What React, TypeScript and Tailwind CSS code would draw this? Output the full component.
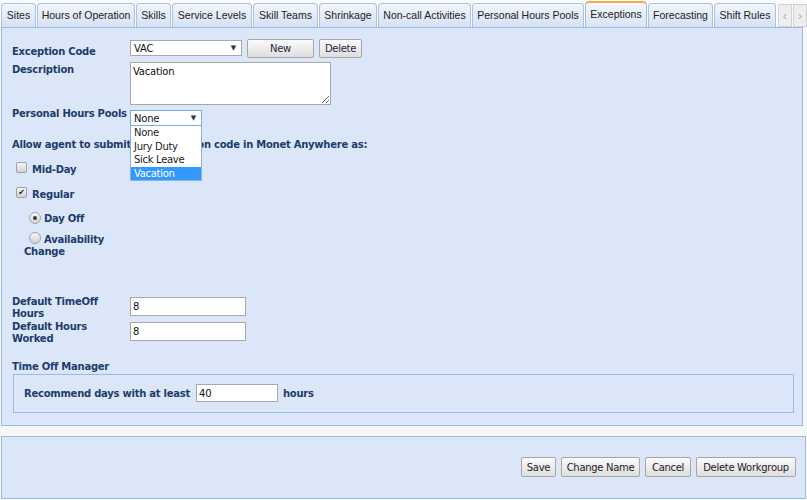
import React from 'react'

const tabs = [
  { label: 'Sites', w: 'w-[35px]' },
  { label: 'Hours of Operation', w: 'w-[98px]' },
  { label: 'Skills', w: 'w-[35px]' },
  { label: 'Service Levels', w: 'w-[80px]' },
  { label: 'Skill Teams', w: 'w-[65px]' },
  { label: 'Shrinkage', w: 'w-[58px]' },
  { label: 'Non-call Activities', w: 'w-[93px]' },
  { label: 'Personal Hours Pools', w: 'w-[112px]' },
  { label: 'Exceptions', w: 'w-[62px]', active: true },
  { label: 'Forecasting', w: 'w-[65px]' },
  { label: 'Shift Rules', w: 'w-[62px]' },
]

const pools = ['None', 'Jury Duty', 'Sick Leave', 'Vacation']

const label = 'font-bold leading-[12px] text-[10px] tracking-[-0.25px] text-[#1c3c6c]'
const field = 'border border-[#a9a9a9] bg-white px-[2px] text-[10px] tracking-[-0.2px] text-[#111] outline-none'

function Button({ children, w }: { children: React.ReactNode; w: string }) {
  return (
    <div
      className={`${w} flex h-[20px] items-center justify-center rounded-[2px] border border-[#a6a6a6] bg-gradient-to-b from-[#fbfbfb] to-[#dedede] text-[10px] tracking-[-0.3px] text-[#222]`}
    >
      {children}
    </div>
  )
}

function Checkbox({ checked }: { checked?: boolean }) {
  return (
    <div className="flex h-[11px] w-[11px] shrink-0 items-center justify-center rounded-[2px] border border-[#a0a0a0] bg-gradient-to-b from-[#f4f4f4] to-[#d4d4d4] text-[8px] leading-none text-[#222]">
      {checked ? '✔' : null}
    </div>
  )
}

function Radio({ checked }: { checked?: boolean }) {
  return (
    <div className="flex h-[12px] w-[12px] shrink-0 items-center justify-center rounded-full border border-[#a4a4a4] bg-gradient-to-b from-[#f6f6f6] to-[#d2d2d2]">
      {checked ? <div className="h-[4px] w-[4px] rounded-full bg-[#3a3a3a]" /> : null}
    </div>
  )
}

export default function App() {
  return (
    <div className="h-[500px] w-[807px] overflow-hidden bg-[#f7f7f7] font-['DejaVu_Sans',Verdana,sans-serif]">
      {/* tab strip */}
      <div className="flex h-[27px] items-end gap-[1px] bg-[#fbfbfb] pl-[1px] font-['Liberation_Sans',Arial,sans-serif] text-[10.5px] text-[#222]">
        {tabs.map((t) =>
          t.active ? (
            <div
              key={t.label}
              className={`${t.w} flex h-[26px] shrink-0 items-center justify-center rounded-t-[4px] border border-b-0 border-t-2 border-[#a3bde3] border-t-[#f2ac45] bg-gradient-to-b from-[#f3f7fd] to-[#d9e4f5]`}
            >
              {t.label}
            </div>
          ) : (
            <div
              key={t.label}
              className={`${t.w} flex h-[24px] shrink-0 items-center justify-center rounded-t-[4px] border border-b-0 border-[#a9c2e6] bg-gradient-to-b from-[#f2f6fc] to-[#d5e1f3] pt-[1px]`}
            >
              {t.label}
            </div>
          ),
        )}
        <div className="ml-[1px] flex h-[23px] w-[15px] items-center justify-center border border-[#d2d2d2] bg-[#eeeeee] text-[13px] text-[#b4b4b4]">‹</div>
        <div className="flex h-[23px] w-[15px] items-center justify-center border border-[#d2d2d2] bg-[#eeeeee] text-[13px] text-[#b4b4b4]">›</div>
      </div>

      {/* main panel */}
      <div className="ml-[1px] h-[399px] w-[802px] border border-[#99bbe8] bg-[#dbe6f8] pl-[10px] pt-[11px]">
        <div className="flex h-[19px]">
          <div className={`${label} w-[118px] shrink-0 pt-[7px]`}>Exception Code</div>
          <div className={`${field} mt-[1px] flex h-[16px] w-[112px] items-center justify-between pl-[3px] pr-[5px]`}>
            <span>VAC</span>
            <span className="text-[7px] text-[#333]">▼</span>
          </div>
          <div className="ml-[5px] flex h-[19px] w-[67px] items-center justify-center rounded-[2px] border border-[#a6a6a6] bg-gradient-to-b from-[#fbfbfb] to-[#dedede] text-[10px] tracking-[-0.3px] text-[#2a2440]">New</div>
          <div className="ml-[5px] flex h-[19px] w-[43px] items-center justify-center rounded-[2px] border border-[#a6a6a6] bg-gradient-to-b from-[#fbfbfb] to-[#dedede] text-[10px] tracking-[-0.3px] text-[#2a2440]">Delete</div>
        </div>

        <div className="mt-[4px] flex">
          <div className={`${label} w-[118px] shrink-0 pt-[2px]`}>Description</div>
          <textarea
            defaultValue="Vacation"
            className="h-[43px] w-[201px] border border-[#a9a9a9] bg-white px-[2px] pt-[2px] text-[10px] leading-[13px] tracking-[-0.2px] text-[#111] outline-none"
          />
        </div>

        <div className="mt-[2px] flex">
          <div className={`${label} w-[118px] shrink-0 pt-[1px]`}>Personal Hours Pools</div>
          <div className="relative mt-[3px]">
            <div className="flex h-[16px] w-[72px] items-center justify-between border border-[#7eadd9] bg-white pl-[3px] pr-[5px] text-[10px] tracking-[-0.2px] text-[#111]">
              <span>None</span>
              <span className="text-[7px] text-[#333]">▼</span>
            </div>
            <div className="absolute left-0 top-full z-10 w-[72px] border border-t-0 border-[#8fb2da] bg-white">
              {pools.map((p) => (
                <div
                  key={p}
                  className={`flex h-[13.5px] items-center pl-[3px] text-[10px] tracking-[-0.3px] ${p === 'Vacation' ? 'bg-[#3399ff] text-white' : 'text-[#222]'}`}
                >
                  {p}
                </div>
              ))}
            </div>
          </div>
        </div>

        <div className={`${label} mt-[13px]`}>Allow agent to submit this exception code in Monet Anywhere as:</div>

        <div className="mt-[11px] flex h-[13px] items-start">
          <div className="ml-[4px]">
            <Checkbox />
          </div>
          <div className={`${label} ml-[5px] mt-[2px]`}>Mid-Day</div>
        </div>
        <div className="mt-[12px] flex h-[13px] items-start">
          <div className="ml-[4px]">
            <Checkbox checked />
          </div>
          <div className={`${label} ml-[5px] mt-[2px]`}>Regular</div>
        </div>
        <div className="mt-[12px] flex h-[12px] items-start">
          <div className="ml-[17px]">
            <Radio checked />
          </div>
          <div className={`${label} ml-[3px] mt-[1px]`}>Day Off</div>
        </div>
        <div className="mt-[8px] flex h-[13px] items-start">
          <div className="ml-[17px]">
            <Radio />
          </div>
          <div className={`${label} ml-[3px] mt-[2px]`}>Availability</div>
        </div>
        <div className={`${label} pl-[12px] pt-[1px]`}>Change</div>

        <div className="mt-[37px] flex">
          <div className={`${label} w-[118px] shrink-0 pt-[1px]`}>
            Default TimeOff
            <br />
            Hours
          </div>
          <input defaultValue="8" className={`${field} mt-[2px] h-[19px] w-[116px]`} />
        </div>
        <div className="flex">
          <div className={`${label} w-[118px] shrink-0 pt-[1px]`}>
            Default Hours
            <br />
            Worked
          </div>
          <input defaultValue="8" className={`${field} mt-[2px] h-[19px] w-[116px]`} />
        </div>

        <div className={`${label} mt-[15px] pt-[1px]`}>Time Off Manager</div>
        <div className="ml-[1px] mt-[1px] flex w-[781px] items-start border border-[#99bbe8] pb-[10px] pl-[10px] pt-[9px]">
          <div className={`${label} w-[172px] shrink-0 pt-[4px]`}>Recommend days with at least</div>
          <input defaultValue="40" className={`${field} h-[18px] w-[82px]`} />
          <div className={`${label} ml-[5px] pt-[4px]`}>hours</div>
        </div>
      </div>

      {/* action panel */}
      <div className="ml-[1px] mt-[10px] flex h-[63px] w-[805px] justify-end gap-[5px] border border-[#99bbe8] bg-[#dbe6f8] pr-[9px] pt-[20px]">
        <Button w="w-[35px]">Save</Button>
        <Button w="w-[79px]">Change Name</Button>
        <Button w="w-[46px]">Cancel</Button>
        <Button w="w-[100px]">Delete Workgroup</Button>
      </div>
    </div>
  )
}
